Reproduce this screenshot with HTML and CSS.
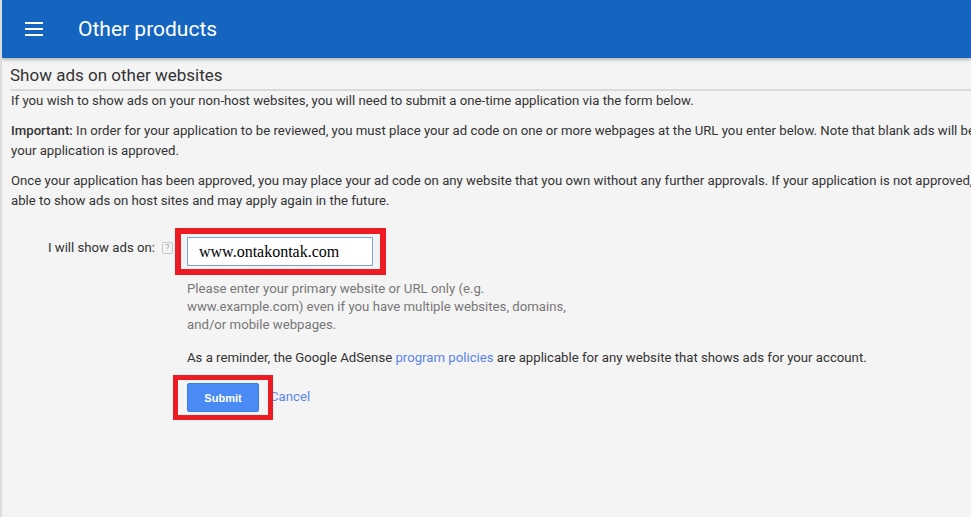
FILE: index.html
```html
<!DOCTYPE html>
<html lang="en">
<head>
  <meta charset="UTF-8" />
  <meta name="viewport" content="width=device-width, initial-scale=1.0" />
  <title>Other products</title>
  <link rel="stylesheet" href="styles.css">
</head>
<body>
  <!-- Top bar -->
  <header class="topbar">
    <span class="menu-icon"><i></i><i></i><i></i></span>
    <span class="topbar-title">Other products</span>
  </header>

  <h2 class="section-title">Show ads on other websites</h2>

  <div class="content">
    <p>If you wish to show ads on your non-host websites, you will need to submit a one-time application via the form below.</p>
    <p><b>Important:</b> In order for your application to be reviewed, you must place your ad code on one or more webpages at the URL you enter below. Note that blank ads will be shown until your application is approved.</p>
    <p>Once your application has been approved, you may place your ad code on any website that you own without any further approvals. If your application is not approved, you will still be able to show ads on host sites and may apply again in the future.</p>

    <!-- Application form -->
    <form class="apply-form" onsubmit="return false">
      <div class="form-row">
        <div class="label-cell">
          <label for="site">I will show ads on:</label>
          <span class="help">?</span>
        </div>
        <div class="field marked">
          <input type="text" id="site" value="www.ontakontak.com">
        </div>
      </div>
      <div class="form-body">
        <p class="hint">Please enter your primary website or URL only (e.g. www.example.com) even if you have multiple websites, domains, and/or mobile webpages.</p>
        <p class="reminder">As a reminder, the Google AdSense <a href="#">program policies</a> are applicable for any website that shows ads for your account.</p>
        <div class="actions">
          <span class="marked btn-wrap"><button class="btn-submit">Submit</button></span>
          <a href="#" class="cancel">Cancel</a>
        </div>
      </div>
    </form>
  </div>
</body>
</html>
```

FILE: styles.css
```css
/* Global styles */
html, body {
  height: 100%;
}
body {
  margin: 0;
  background: #f4f4f4;
  color: #333;
  font-family: Roboto, Arial, sans-serif;
  font-size: 13.2px;
  border-left: 2px solid #dcdcdc;
  overflow: hidden;
}
p {
  margin: 0;
  line-height: 20px;
}
a {
  color: #5a85e8;
  text-decoration: none;
}
/* Top bar */
.topbar {
  height: 58px;
  background: #1565c0;
  display: flex;
  align-items: center;
  padding-left: 23px;
  box-shadow: 0 2px 3px rgba(0,0,0,0.25);
  position: relative;
}
.menu-icon {
  width: 18px;
  display: flex;
  flex-direction: column;
  gap: 4px;
}
.menu-icon i {
  display: block;
  height: 2px;
  background: #fff;
}
.topbar-title {
  color: #fff;
  font-size: 21px;
  margin-left: 35px;
}
/* Section heading */
.section-title {
  margin: 0 0 0 8px;
  padding: 7px 0 4px;
  font-size: 17px;
  font-weight: normal;
  line-height: 20px;
  color: #333;
  border-bottom: 2px solid #dadada;
}
/* Intro text (the page is wider than the window) */
.content {
  padding-left: 9px;
}
.content > p {
  width: 1062px;
}
.content > p + p {
  margin-top: 10px;
}
.content b {
  font-weight: 500;
}
/* Form */
.apply-form {
  margin-top: 26px;
}
.form-row {
  display: flex;
  align-items: flex-start;
}
.label-cell {
  width: 162px;
  padding-top: 1px;
  line-height: 20px;
  display: flex;
  justify-content: flex-end;
  align-items: center;
  gap: 7px;
}
.help {
  width: 9px;
  height: 10px;
  border: 1px solid #c8c8c8;
  border-radius: 2px;
  color: #aaa;
  font-size: 9px;
  line-height: 10px;
  text-align: center;
}
.field {
  margin-left: 14px;
}
.field input {
  display: block;
  width: 186px;
  height: 29px;
  box-sizing: border-box;
  border: 1px solid #7aa3ea;
  background: #fff;
  padding: 0 0 0 11px;
  font-family: "Liberation Serif", "Times New Roman", serif;
  font-size: 16px;
  color: #000;
  outline: none;
}
/* red annotation boxes */
.marked {
  position: relative;
  display: inline-block;
}
.field.marked::after {
  content: "";
  position: absolute;
  left: -12px;
  top: -9px;
  right: -13px;
  bottom: -9px;
  border: 6px solid #ed1c24;
  pointer-events: none;
}
.form-body {
  padding-left: 176px;
}
.hint {
  margin-top: 14px;
  width: 395px;
  line-height: 18px;
  color: #777;
}
.reminder {
  margin-top: 14px;
}
.actions {
  margin-top: 15px;
  display: flex;
  align-items: center;
  gap: 11px;
}
.btn-wrap {
  line-height: 0;
}
.btn-wrap::after {
  content: "";
  position: absolute;
  left: -14px;
  top: -8px;
  right: -14px;
  bottom: -8px;
  border: 5px solid #ed1c24;
  pointer-events: none;
}
.btn-submit {
  width: 72px;
  height: 29px;
  background: #4a8af4;
  border: 1px solid #3b7be6;
  border-radius: 2px;
  color: #fff;
  font-family: Arial, "Liberation Sans", sans-serif;
  font-size: 11px;
  font-weight: bold;
  cursor: pointer;
}
.cancel {
  font-size: 13.2px;
  margin-top: -2px;
}
```
